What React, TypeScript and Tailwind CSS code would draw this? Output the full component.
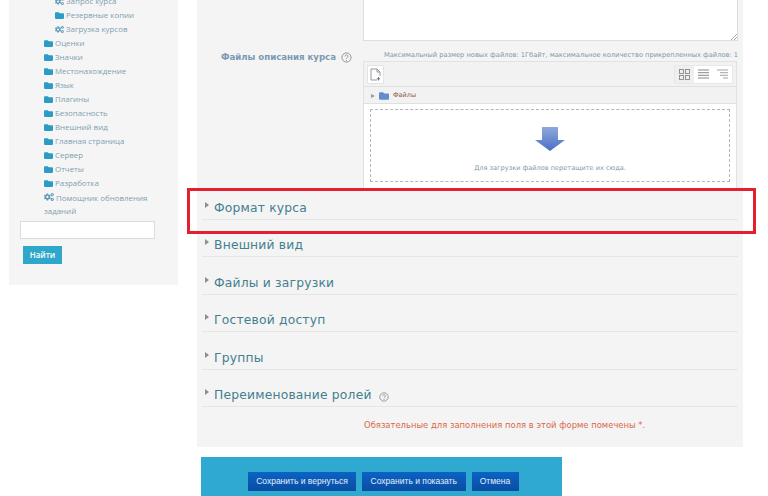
import React from 'react';
import { FaFolder, FaCogs } from 'react-icons/fa';

const sans = 'font-["Open_Sans",sans-serif]';
const verdana = 'font-["DejaVu_Sans",sans-serif]';

const adminItems = ['Оценки', 'Значки', 'Местонахождение', 'Язык', 'Плагины', 'Безопасность', 'Внешний вид', 'Главная страница', 'Сервер', 'Отчеты', 'Разработка'];
const sections = ['Формат курса', 'Внешний вид', 'Файлы и загрузки', 'Гостевой доступ', 'Группы', 'Переименование ролей'];

function Row({ icon, label, indent }: { icon: 'folder' | 'cogs'; label: string; indent: string }) {
  return (
    <div className={`flex h-[14px] items-center ${indent}`}>
      {icon === 'folder' ? (
        <FaFolder size={9} className="mr-[2px] w-[9px] text-[#2b9cc4]" />
      ) : (
        <FaCogs size={9} className="mr-[2px] w-[9px] text-[#5f9cb8]" />
      )}
      <span className="whitespace-nowrap text-[7.9px] text-[#7f9fb3]">{label}</span>
    </div>
  );
}

function Sidebar() {
  return (
    <aside className={`ml-[9px] flex h-[285px] w-[169px] flex-col bg-[#f5f5f5] ${sans}`}>
      <div className="-mt-[5.5px] flex flex-col">
        <Row icon="cogs" label="Запрос курса" indent="pl-[46px]" />
        <Row icon="folder" label="Резервные копии" indent="pl-[46px]" />
        <Row icon="cogs" label="Загрузка курсов" indent="pl-[46px]" />
        {adminItems.map((item) => (
          <Row key={item} icon="folder" label={item} indent="pl-[35px]" />
        ))}
        <div className="pl-[35px] pt-[1px] text-[7.9px] leading-[13px] text-[#7f9fb3]">
          <FaCogs size={10} className="mr-[2px] inline-block align-[-1px] text-[#5f9cb8]" />
          Помощник обновления
          <br />
          заданий
        </div>
      </div>
      <div className="ml-[11px] mt-[3.5px] h-[18px] w-[135px] border border-[#dcdcdc] bg-white" />
      <button className="ml-[14px] mt-[7px] flex h-[18px] w-[39px] items-center justify-center bg-[#2ea7cb] text-[8px] font-semibold text-white">
        Найти
      </button>
    </aside>
  );
}

function HelpIcon({ size }: { size: number }) {
  return (
    <svg width={size} height={size} viewBox="0 0 12 12" fill="none" className="shrink-0">
      <circle cx="6" cy="6" r="5" stroke="#8a8a8a" strokeWidth="1" />
      <path d="M4.4 4.8a1.6 1.6 0 1 1 2.4 1.4c-.5.3-.8.6-.8 1.1" stroke="#8a8a8a" strokeWidth="1" />
      <circle cx="6" cy="9" r=".6" fill="#8a8a8a" />
    </svg>
  );
}

function FilePicker() {
  return (
    <div className="flex h-[127px] w-[374px] flex-col border-x border-t border-[#e2e2e2] bg-white">
      <div className="flex h-[25px] items-center justify-between border-b border-[#e0e0e0] bg-[#f2f2f2] px-[3px]">
        <div className="flex h-[19px] w-[17px] items-center justify-center border border-[#e4e4e4] bg-white">
          <svg width="11" height="13" viewBox="0 0 11 13" fill="none">
            <path d="M1 1h6l3 3v4M7 1v3h3M1 1v11h6" stroke="#8c8c8c" strokeWidth=".9" />
            <path d="M8.5 9v3.5M6.8 10.8h3.4" stroke="#666" strokeWidth=".9" />
          </svg>
        </div>
        <div className="flex h-[19px] border border-[#e8e8e8]">
          <div className="flex w-[19px] items-center justify-center bg-[#efefef]">
            <svg width="11" height="11" viewBox="0 0 11 11" fill="none" stroke="#888" strokeWidth=".9">
              <rect x=".5" y=".5" width="4" height="4" />
              <rect x="6.5" y=".5" width="4" height="4" />
              <rect x=".5" y="6.5" width="4" height="4" />
              <rect x="6.5" y="6.5" width="4" height="4" />
            </svg>
          </div>
          <div className="flex w-[19px] items-center justify-center bg-white">
            <svg width="11" height="10" viewBox="0 0 11 10" stroke="#888" strokeWidth="1">
              <path d="M0 1h11M0 3.7h11M0 6.3h11M0 9h11" />
            </svg>
          </div>
          <div className="flex w-[19px] items-center justify-center bg-white">
            <svg width="11" height="10" viewBox="0 0 11 10" stroke="#999" strokeWidth=".9">
              <path d="M0 1h11M3 3.7h8M3 6.3h8M6 9h5" />
            </svg>
          </div>
        </div>
      </div>
      <div className={`flex h-[17px] items-center gap-[3px] border-b border-[#e0e0e0] bg-[#f2f2f2] pl-[7px] pt-[1px] text-[6.5px] text-[#8a5a4a] ${verdana}`}>
        <span className="h-0 w-0 border-y-[2.5px] border-l-[4px] border-y-transparent border-l-[#999]" />
        <FaFolder size={10} className="mx-[1px] text-[#5f8fcf]" />
        <span>Файлы</span>
      </div>
      <div className="flex flex-1 flex-col px-[6px] pt-[5px]">
        <div className="flex h-[73px] flex-col items-center border border-dashed border-[#b5b5b5] pt-[17px]">
          <svg width="30" height="24" viewBox="0 0 30 24">
            <defs>
              <linearGradient id="arrow" x1="0" y1="0" x2="0" y2="1">
                <stop offset="0" stopColor="#8fa8dc" />
                <stop offset="1" stopColor="#4a6fc4" />
              </linearGradient>
            </defs>
            <path d="M7 0h16v13h7L15 24 0 13h7z" fill="url(#arrow)" />
          </svg>
          <p className={`mt-[13px] text-[6.6px] text-[#8399a8] ${verdana}`}>Для загрузки файлов перетащите их сюда.</p>
        </div>
      </div>
    </div>
  );
}

function CollapsedSection({ title }: { title: string }) {
  return (
    <div className="mx-[5px] flex h-[37.5px] items-end border-b border-[#e6e6e6] pb-[1px]">
      <span className="mb-[10px] ml-[3px] mr-[5px] h-0 w-0 border-y-[3.5px] border-l-[4px] border-y-transparent border-l-[#8f8f8f]" />
      <h3 className={`text-[12.3px] leading-[20px] tracking-[0.2px] text-[#43808f] ${verdana}`}>{title}</h3>
      {title === 'Переименование ролей' && (
        <span className="mb-[3px] ml-[7px]">
          <HelpIcon size={10} />
        </span>
      )}
    </div>
  );
}

function MainForm() {
  return (
    <main className="ml-[19px] flex w-[546px] flex-col">
      <section className="flex h-[447px] flex-col bg-[#f4f4f4]">
        <div className="relative ml-[166px] h-[41px] w-[375px] border border-t-0 border-[#dedede] bg-white">
          <svg width="6" height="6" viewBox="0 0 6 6" stroke="#999" strokeWidth=".8" className="absolute bottom-0 right-0">
            <path d="M0 6 6 0M3 6l3-3" />
          </svg>
        </div>
        <div className="flex">
          <div className={`flex h-[25px] w-[166px] items-center justify-end gap-[5px] pr-[11px] pt-[8px] ${verdana}`}>
            <span className="whitespace-nowrap text-[8.6px] font-bold text-[#7b9ab3]">Файлы описания курса</span>
            <HelpIcon size={11} />
          </div>
          <p className={`mt-[9px] whitespace-nowrap pl-[21px] text-[6.67px] text-[#7f98a8] ${verdana}`}>
            Максимальный размер новых файлов: 1Гбайт, максимальное количество прикрепленных файлов: 1
          </p>
        </div>
        <div className="-mt-[5px] ml-[166px]">
          <FilePicker />
        </div>
        <div className="-mt-[6px] flex flex-col">
          {sections.map((title) => (
            <CollapsedSection key={title} title={title} />
          ))}
        </div>
        <p className={`mt-[11.5px] pl-[167px] text-[8.43px] text-[#d9694a] ${verdana}`}>
          Обязательные для заполнения поля в этой форме помечены *.
        </p>
      </section>
      <div className="ml-[4px] mt-[10px] flex h-[39px] w-[361px] items-start gap-[5.5px] bg-[#30a9d0] pl-[47px] pt-[15px] font-['Liberation_Sans',sans-serif] text-[8.5px] text-[#e4eefa]">
        <button className="h-[19px] w-[108px] bg-gradient-to-b from-[#0b63c4] to-[#0a4da3]">Сохранить и вернуться</button>
        <button className="h-[19px] w-[104.5px] bg-gradient-to-b from-[#0b63c4] to-[#0a4da3]">Сохранить и показать</button>
        <button className="h-[19px] w-[47px] bg-gradient-to-b from-[#0b63c4] to-[#0a4da3]">Отмена</button>
      </div>
    </main>
  );
}

export default function App() {
  return (
    <div className="relative flex h-[496px] w-[768px] items-start overflow-hidden bg-white">
      <Sidebar />
      <MainForm />
      <div className="absolute left-[187px] top-[188px] h-[46px] w-[569px] border-[3px] border-[#e2202e]" />
    </div>
  );
}
